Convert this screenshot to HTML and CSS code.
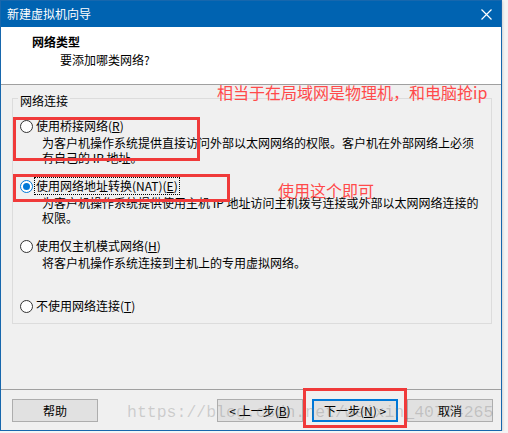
FILE: index.html
```html
<!DOCTYPE html>
<html lang="zh-CN">

<head>
    <meta charset="UTF-8">
    <title>新建虚拟机向导</title>
    <link rel="stylesheet" href="styles.css">
</head>

<body>
    <div class="window">
        <div class="titlebar">
            <span>新建虚拟机向导</span>
            <svg class="close" width="11" height="11" viewBox="0 0 11 11">
                <path d="M0.5 0.5 L10.5 10.5 M10.5 0.5 L0.5 10.5" stroke="#fff" stroke-width="1.2" fill="none" />
            </svg>
        </div>

        <div class="header">
            <div class="h-title">网络类型</div>
            <div class="h-sub">要添加哪类网络?</div>
        </div>

        <div class="content">
            <fieldset class="group">
                <legend>网络连接</legend>
                <div class="option">
                    <div class="opt-row"><span class="radio"></span><span>使用桥接网络(<u>R</u>)</span></div>
                    <div class="opt-desc">为客户机操作系统提供直接访问外部以太网网络的权限。客户机在外部网络上必须<br>有自己的 IP 地址。</div>
                </div>
                <div class="option">
                    <div class="opt-row"><span class="radio checked"></span><span class="focus">使用网络地址转换(NAT)(<u>E</u>)</span></div>
                    <div class="opt-desc">为客户机操作系统提供使用主机 IP 地址访问主机拨号连接或外部以太网网络连接的<br>权限。</div>
                </div>
                <div class="option">
                    <div class="opt-row"><span class="radio"></span><span>使用仅主机模式网络(<u>H</u>)</span></div>
                    <div class="opt-desc">将客户机操作系统连接到主机上的专用虚拟网络。</div>
                </div>
                <div class="option last">
                    <div class="opt-row"><span class="radio"></span><span>不使用网络连接(<u>T</u>)</span></div>
                </div>
            </fieldset>
        </div>

        <div class="footer">
            <button class="btn">帮助</button>
            <div class="spacer"></div>
            <button class="btn">&lt; 上一步(<u>B</u>)</button>
            <button class="btn default">下一步(<u>N</u>) &gt;</button>
            <button class="btn">取消</button>
        </div>

        <!-- annotations drawn on top of the screenshot -->
        <div class="mark mark-bridge"></div>
        <div class="mark mark-nat"></div>
        <div class="mark mark-next"></div>
        <div class="note note-bridge">相当于在局域网是物理机，和电脑抢ip</div>
        <div class="note note-nat">使用这个即可</div>
        <div class="watermark">https://blog.csdn.net/weixin_40774265</div>
    </div>
</body>

</html>
```

FILE: styles.css
```css
* {
    box-sizing: border-box;
}

body {
    margin: 0;
    background-color: #f4f4f4;
    font-family: "Noto Sans CJK SC", "Microsoft YaHei", sans-serif;
    font-size: 12px;
    line-height: 16px;
    color: #000;
}

.window {
    position: relative;
    width: 502px;
    height: 431px;
    display: flex;
    flex-direction: column;
    border: 1px solid #1767ad;
    background-color: #f0f0f0;
    box-shadow: 0 1px 3px rgba(0, 0, 0, 0.25);
}

.titlebar {
    height: 26px;
    display: flex;
    align-items: center;
    justify-content: space-between;
    padding: 0 9px 0 6px;
    background-color: #0063b1;
    color: #fff;
}

.close {
    display: block;
}

.header {
    height: 58px;
    padding: 7px 0 0 31px;
    background-color: #fff;
    border-bottom: 1px solid #a0a0a0;
}

.h-title {
    font-weight: bold;
}

.h-sub {
    margin: 2px 0 0 28px;
}

.content {
    flex: 1;
    padding: 3px 9px 0 11px;
}

.group {
    margin: 0;
    min-width: 0;
    padding: 9px 7px 8px 7px;
    border: 1px solid #dcdcdc;
    display: flex;
    flex-direction: column;
    gap: 12px;
}

.group legend {
    padding: 6px 2px 0;
    margin-left: -2px;
    line-height: 14px;
}

.option {
    min-height: 48px;
}

.option.last {
    min-height: 0;
}

.opt-row {
    height: 18px;
    display: flex;
    align-items: center;
    gap: 3px;
}

.opt-desc {
    padding-left: 22px;
    line-height: 15px;
    white-space: nowrap;
    min-height: 30px;
}

.radio {
    width: 13px;
    height: 13px;
    border: 1px solid #333;
    border-radius: 50%;
    background-color: #fff;
    display: flex;
    align-items: center;
    justify-content: center;
}

.radio.checked {
    border-color: #0078d7;
}

.radio.checked::after {
    content: "";
    width: 7px;
    height: 7px;
    border-radius: 50%;
    background-color: #0078d7;
}

.focus {
    outline: 1px dotted #000;
    outline-offset: 0;
    padding: 0 1px;
    margin-left: -1px;
}

.footer {
    height: 41px;
    display: flex;
    gap: 9px;
    padding: 9px 8px 0 11px;
    border-top: 1px solid #a0a0a0;
}

.spacer {
    flex: 1;
}

.btn {
    width: 86px;
    height: 23px;
    padding: 0;
    font-family: inherit;
    font-size: 12px;
    color: #000;
    background-color: #e1e1e1;
    border: 1px solid #adadad;
}

.btn.default {
    border: 2px solid #0078d7;
}

.mark {
    position: absolute;
    border: 3px solid #f03a3a;
}

.mark-bridge {
    left: 12px;
    top: 116px;
    width: 187px;
    height: 44px;
}

.mark-nat {
    left: 12px;
    top: 173px;
    width: 217px;
    height: 28px;
}

.mark-next {
    left: 302px;
    top: 387px;
    width: 104px;
    height: 40px;
}

.note {
    position: absolute;
    font-size: 16px;
    line-height: 20px;
    color: #ff4a4a;
    white-space: nowrap;
}

.note-bridge {
    left: 216px;
    top: 81px;
}

.note-nat {
    left: 277px;
    top: 179px;
}

.watermark {
    position: absolute;
    left: 126px;
    top: 401px;
    font-family: "Liberation Mono", monospace;
    font-size: 16.5px;
    line-height: 22px;
    color: rgba(110, 110, 110, 0.28);
    white-space: nowrap;
}
```
